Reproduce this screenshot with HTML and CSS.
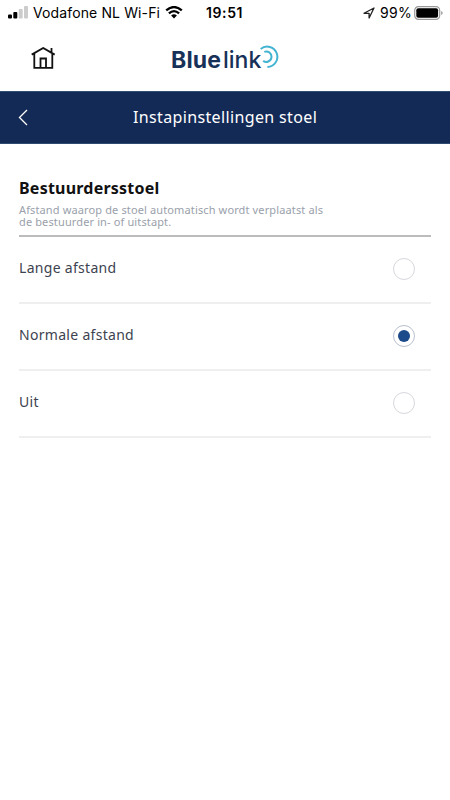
FILE: index.html
```html
<!DOCTYPE html>
<html lang="nl">
<head>
<meta charset="utf-8">
<title>Instapinstellingen stoel</title>
<link rel="stylesheet" href="styles.css">
</head>
<body>
<div class="status">
  <svg class="signal" width="20" height="14" viewBox="0 0 20 14"><rect x="0" y="8.500" width="4" height="4" rx="1"/><rect x="5.300" y="6" width="4" height="6.500" rx="1"/><rect class="weak" x="10.700" y="3" width="4" height="9.500" rx="1"/><rect class="weak" x="16" y="0" width="4" height="12.500" rx="1"/></svg>
  <span class="carrier">Vodafone NL Wi-Fi</span>
  <svg class="wifi" width="18" height="13" viewBox="0 0 18 13"><path d="M1.200 4.400Q9-2.300 16.800 4.400M3.900 7.300Q9 2.900 14.100 7.300"/><path class="solid" d="M6.100 9.500Q9 7.100 11.900 9.500L9 12.500Z"/></svg>
  <span class="time">19:51</span>
  <svg class="location" width="12" height="12" viewBox="0 0 12 12"><path d="M1 6.300 11 1 6.100 11V6.300Z"/></svg>
  <span class="percent">99%</span>
  <svg class="battery" width="29" height="14" viewBox="0 0 29 14"><rect class="shell" x=".7" y=".7" width="25" height="12.600" rx="3.700"/><rect x="2.300" y="2.300" width="21.800" height="9.400" rx="2"/><path class="cap" d="M27.200 5Q28.700 5.500 28.700 7T27.200 9Z"/></svg>
</div>
<header class="brand">
  <svg class="home" width="25" height="23" viewBox="0 0 25 23"><path d="M.7 7.600 12.200 1 23.700 7.600M3.300 6.500V20.800H21.300V6.500M20.500 5.500V1M9.500 20.500V11.500H15V20.500"/></svg>
  <div class="logo"><span class="blue">Blue</span><span class="link">link</span><svg class="waves" width="21" height="24" viewBox="0 0 21 24"><path d="M2.700 3.900A10.200 10.200 0 1 1 9.400 22M6.300 6.900A5.200 5.200 0 1 1 5.200 15.900"/></svg></div>
</header>
<nav class="titlebar">
  <svg class="back" width="10" height="17" viewBox="0 0 10 17"><path d="M9 1 1.500 8.500 9 16"/></svg>
  <h1>Instapinstellingen stoel</h1>
</nav>
<main>
  <section class="intro">
    <h2>Bestuurdersstoel</h2>
    <p>Afstand waarop de stoel automatisch wordt verplaatst als<br>de bestuurder in- of uitstapt.</p>
  </section>
  <div class="option"><span>Lange afstand</span><i class="radio"></i></div>
  <div class="option"><span>Normale afstand</span><i class="radio selected"></i></div>
  <div class="option"><span>Uit</span><i class="radio"></i></div>
</main>
</body>
</html>
```
FILE: styles.css
```css
* { box-sizing: border-box; }
body { margin: 0; background: #fff; width: 450px; height: 800px; overflow: hidden; font-family: "Noto Sans", sans-serif; color: #000; }
svg { display: block; flex: none; }
.status { height: 25px; display: flex; align-items: center; padding-left: 8px; font: 14px/25px Inter, sans-serif; white-space: nowrap; }
.weak { fill: #ccc; }
.carrier { width: 127px; margin-left: 5px; letter-spacing: .12px; }
.wifi { margin-left: 5px; }
.wifi path { fill: none; stroke: #000; stroke-width: 2.300; }
.wifi .solid { fill: #000; stroke: none; }
.time { width: 38px; margin-left: 23px; font-weight: 600; letter-spacing: .6px; }
.location { margin-left: 119px; }
.location path { fill: none; stroke: #222; stroke-width: 1.300; stroke-linejoin: round; }
.percent { width: 32px; margin-left: 5px; letter-spacing: .3px; }
.battery { margin-left: 2px; }
.shell { fill: none; stroke: #999; stroke-width: 1.200; }
.cap { fill: #999; }
.brand { height: 66px; display: flex; padding: 21px 0 0 31px; }
.home { margin-top: 1px; }
.home path { fill: none; stroke: #111; stroke-width: 1.800; }
.logo { display: flex; margin-left: 115px; color: #173158; font: 23px/29px Inter, sans-serif; }
.blue { width: 52px; font-weight: 700; letter-spacing: .2px; }
.link { width: 39px; font-weight: 500; letter-spacing: 0; }
.waves { margin-left: -4px; margin-top: -1px; }
.waves path { fill: none; stroke: #42b4d1; stroke-width: 2; }
.titlebar { height: 53px; display: flex; align-items: center; padding-left: 18px; background: #142a56; border-top: 1px solid #304b70; border-bottom: 1px solid #304b70; color: #fff; }
.back path { fill: none; stroke: #fff; stroke-width: 1.300; }
h1 { margin: -2px 0 0 105px; font-size: 16px; line-height: 24px; font-weight: 400; letter-spacing: .36px; white-space: nowrap; }
main { padding: 0 19px; }
.intro { height: 93px; padding-top: 32px; border-bottom: 2px solid #bcbcbc; }
h2 { margin: 0; font-size: 16px; line-height: 24px; font-weight: 700; letter-spacing: .22px; color: #111; white-space: nowrap; }
p { margin: 4px 0 0; font-size: 11px; line-height: 12px; letter-spacing: .13px; color: #9a9fab; white-space: nowrap; }
.option { height: 67px; display: flex; justify-content: space-between; padding: 19px 16px 0 0; border-bottom: 2px solid #efeff0; color: #3d4350; font-size: 14px; line-height: 24px; letter-spacing: .3px; }
.radio { width: 22px; height: 22px; margin-top: 2px; border: 1px solid #d7d8dd; border-radius: 50%; display: grid; place-items: center; }
.selected { border-color: #b8bfcc; }
.selected::after { content: ""; width: 12px; height: 12px; border-radius: 50%; background: #1d4a8b; }
```
